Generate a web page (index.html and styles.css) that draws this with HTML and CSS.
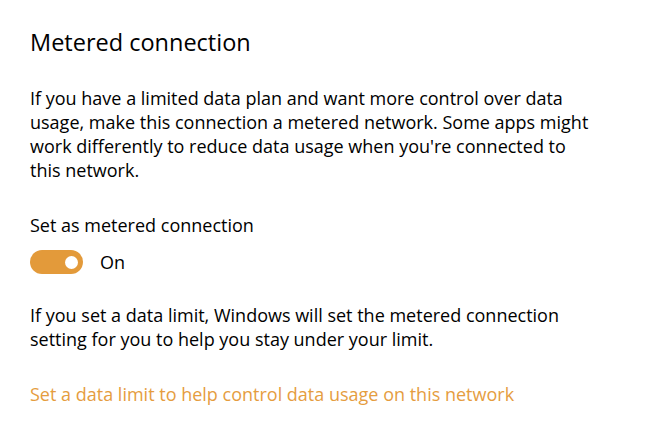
FILE: index.html
```html
<!DOCTYPE html>
<html>
<head>
<meta charset="utf-8">
<link rel="stylesheet" href="styles.css">
</head>
<body>
<main class="page">
  <h1 class="title">Metered connection</h1>
  <p class="text intro">If you have a limited data plan and want more control over data usage, make this connection a metered network. Some apps might work differently to reduce data usage when you're connected to this network.</p>
  <div class="label">Set as metered connection</div>
  <div class="toggle-row">
    <span class="toggle"><span class="knob"></span></span>
    <span class="state">On</span>
  </div>
  <p class="text note">If you set a data limit, Windows will set the metered connection setting for you to help you stay under your limit.</p>
  <a class="link" href="#">Set a data limit to help control data usage on this network</a>
</main>
</body>
</html>
```
FILE: styles.css
```css
html, body {
  margin: 0;
  padding: 0;
  background: #ffffff;
}
body {
  font-family: "Open Sans", "Noto Sans", "Liberation Sans", sans-serif;
  color: #000000;
}
.page {
  display: flex;
  flex-direction: column;
  align-items: flex-start;
  padding: 26px 0 0 30px;
  width: 562px;
}
.title {
  margin: 0;
  font-size: 23.5px;
  font-weight: 400;
  line-height: 32px;
}
.text {
  margin: 0;
  font-size: 18px;
  line-height: 24px;
}
.intro {
  margin-top: 28px;
}
.label {
  margin-top: 31px;
  font-size: 18px;
  line-height: 24px;
}
.toggle-row {
  display: flex;
  align-items: center;
  gap: 17px;
  margin-top: 13px;
}
.toggle {
  width: 53px;
  height: 24px;
  border-radius: 12px;
  background: #e39a3a;
  display: flex;
  align-items: center;
  justify-content: flex-end;
  padding-right: 5px;
  box-sizing: border-box;
}
.knob {
  width: 13px;
  height: 13px;
  border-radius: 50%;
  background: #ffffff;
}
.state {
  font-size: 18px;
  line-height: 24px;
}
.note {
  margin-top: 29px;
}
.link {
  margin-top: 31px;
  font-size: 18px;
  line-height: 24px;
  color: #e59d3f;
  text-decoration: none;
}
```
